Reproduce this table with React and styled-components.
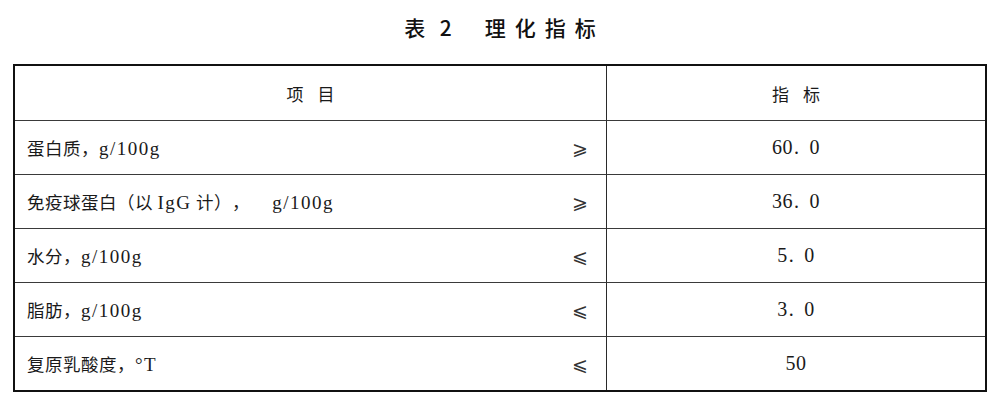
import { Fragment } from "react";
import styled, { createGlobalStyle } from "styled-components";

const GlobalStyle = createGlobalStyle`
  html, body {
    margin: 0;
    padding: 0;
    background: #fff;
  }
  body {
    width: 1000px;
    height: 405px;
    overflow: hidden;
    font-family: "Liberation Serif", "Noto Sans CJK SC", serif;
    color: #1a1a1a;
    text-spacing-trim: space-all;
  }
`;

const Page = styled.div`
  display: flex;
  flex-direction: column;
  padding: 0 13px;
`;

const Title = styled.h1`
  margin: 0;
  height: 64px;
  display: flex;
  align-items: center;
  justify-content: center;
  gap: 33px;
  padding-bottom: 10px;
  box-sizing: border-box;
  font-family: "Noto Sans CJK SC", sans-serif;
  font-size: 21px;
  font-weight: 500;
  color: #111;
`;

const TitlePart = styled.span`
  letter-spacing: ${(p) => p.$spacing || 0}px;
  margin-right: -${(p) => p.$spacing || 0}px;
  word-spacing: 10px;
`;

const Table = styled.div`
  display: grid;
  grid-template-columns: 591px 1fr;
  border: 2px solid #111;
  border-left-width: 2.5px;
  border-right-width: 2.5px;
`;

const Cell = styled.div`
  height: 54px;
  box-sizing: border-box;
  display: flex;
  align-items: center;
  justify-content: ${(p) => (p.$center ? "center" : "space-between")};
  padding: ${(p) => (p.$center ? "0" : "0 18px 0 12px")};
  border-top: ${(p) => (p.$first ? "none" : "1.5px solid #3a3a3a")};
  border-left: ${(p) => (p.$right ? "1.5px solid #2a2a2a" : "none")};
  font-size: 18px;
`;

const Label = styled.span`
  font-family: "Noto Sans CJK SC", serif;
  font-size: 17.5px;
  letter-spacing: 0.5px;
  white-space: pre;
`;

const Latin = styled.span`
  font-family: "Liberation Serif", serif;
  font-size: 19px;
  letter-spacing: 1.5px;
`;

const HeadText = styled.span`
  font-family: "Noto Sans CJK SC", serif;
  font-size: 17px;
  word-spacing: 10px;
`;

const Sign = styled.span`
  font-family: "DejaVu Serif", serif;
  font-size: 19px;
  color: #333;
`;

const Value = styled.span`
  font-family: "Liberation Serif", serif;
  font-size: 20px;
  letter-spacing: 0.5px;
`;

const Dot = styled.span`
  margin: 0 10px 0 1px;
`;

const rows = [
  {
    id: "protein",
    label: (
      <>
        蛋白质，<Latin>g/100g</Latin>
      </>
    ),
    sign: "⩾",
    value: "60.0",
  },
  {
    id: "igg",
    label: (
      <>
        免疫球蛋白（以 <Latin>IgG</Latin> 计），{"\u3000 "}
        <Latin>g/100g</Latin>
      </>
    ),
    sign: "⩾",
    value: "36.0",
  },
  {
    id: "water",
    label: (
      <>
        水分，<Latin>g/100g</Latin>
      </>
    ),
    sign: "⩽",
    value: "5.0",
  },
  {
    id: "fat",
    label: (
      <>
        脂肪，<Latin>g/100g</Latin>
      </>
    ),
    sign: "⩽",
    value: "3.0",
  },
  {
    id: "acid",
    label: (
      <>
        复原乳酸度，<Latin>°T</Latin>
      </>
    ),
    sign: "⩽",
    value: "50",
  },
];

function Number({ value }) {
  const [whole, frac] = value.split(".");
  return (
    <Value>
      {whole}
      {frac !== undefined && (
        <>
          <Dot>.</Dot>
          {frac}
        </>
      )}
    </Value>
  );
}

export default function App() {
  return (
    <>
      <GlobalStyle />
      <Page>
        <Title>
          <TitlePart>表 2</TitlePart>
          <TitlePart $spacing={9}>理化指标</TitlePart>
        </Title>
        <Table>
          <Cell $center $first>
            <HeadText>项 目</HeadText>
          </Cell>
          <Cell $center $first $right>
            <HeadText>指 标</HeadText>
          </Cell>
          {rows.map((r) => (
            <Fragment key={r.id}>
              <Cell>
                <Label>{r.label}</Label>
                <Sign>{r.sign}</Sign>
              </Cell>
              <Cell $center $right>
                <Number value={r.value} />
              </Cell>
            </Fragment>
          ))}
        </Table>
      </Page>
    </>
  );
}
